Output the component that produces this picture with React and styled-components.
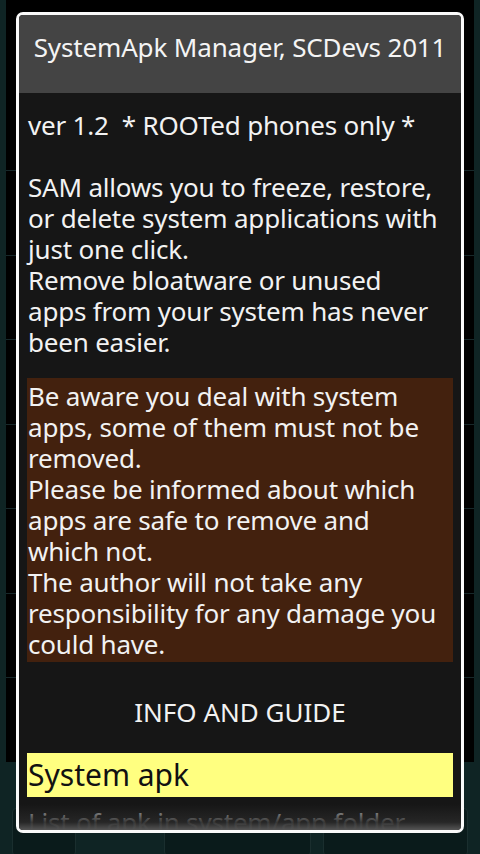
import React from 'react';
import styled, { createGlobalStyle } from 'styled-components';

const GlobalStyle = createGlobalStyle`
    html, body {
        margin: 0;
        padding: 0;
        background: #0c1c1c;
    }
    body {
        font-family: "Noto Sans", "DejaVu Sans", sans-serif;
    }
`;

const rows = [1, 2, 3, 4, 5, 6, 7];

const App = () => {
    return (
        <Screen>
            <GlobalStyle />
            <TopStrip />
            <ListPanel>
                {rows.map((n) => (
                    <ApkRow key={n}>
                        <ApkIcon />
                    </ApkRow>
                ))}
            </ListPanel>
            <ButtonBar>
                <GhostButton $width={64} />
                <GhostButton $width={148} $gap={88} />
                <GhostButton $width={146} $gap={12} />
            </ButtonBar>

            <Dialog>
                <Title>SystemApk Manager, SCDevs 2011</Title>
                <Body>
                    <Paragraph>
                        ver 1.2&nbsp; * ROOTed phones only *<br />
                        <br />
                        SAM allows you to freeze, restore,<br />
                        or delete system applications with<br />
                        just one click.<br />
                        Remove bloatware or unused<br />
                        apps from your system has never<br />
                        been easier.
                    </Paragraph>
                    <Warning>
                        Be aware you deal with system<br />
                        apps, some of them must not be<br />
                        removed.<br />
                        Please be informed about which<br />
                        apps are safe to remove and<br />
                        which not.<br />
                        The author will not take any<br />
                        responsibility for any damage you<br />
                        could have.
                    </Warning>
                    <SectionLabel>INFO AND GUIDE</SectionLabel>
                    <Heading>System apk</Heading>
                    <Paragraph $muted>List of apk in system/app folder</Paragraph>
                    <FadeEdge />
                </Body>
            </Dialog>
        </Screen>
    );
}

export default App;

const Screen = styled.div`
    position: relative;
    width: 480px;
    height: 854px;
    overflow: hidden;
    background: #0f2424;
    display: flex;
    flex-direction: column;
`;

const TopStrip = styled.div`
    height: 12px;
    background: #0d1d1e;
`;

const ListPanel = styled.div`
    margin: 0 6px;
    height: 762px;
    background: #000;
    display: flex;
    flex-direction: column;
    padding-top: 170px;
    box-sizing: border-box;
`;

const ApkRow = styled.div`
    height: 92px;
    border-top: 1px solid #17282a;
    display: flex;
    align-items: center;
    padding-left: 14px;
    box-sizing: border-box;
`;

const ApkIcon = styled.div`
    width: 36px;
    height: 36px;
    border-radius: 8px;
    background: #141c1c;
`;

const ButtonBar = styled.div`
    display: flex;
    padding: 46px 12px 0;
`;

const GhostButton = styled.div`
    width: ${(p) => p.$width}px;
    margin-left: ${(p) => p.$gap || 0}px;
    height: 48px;
    border-radius: 4px;
    background: #0a1b1b;
    border: 1px solid #1a2e2e;
    box-sizing: border-box;
`;

const Dialog = styled.div`
    position: absolute;
    left: 16px;
    top: 12px;
    width: 448px;
    height: 821px;
    box-sizing: border-box;
    border: 3px solid #fafafa;
    border-radius: 7px;
    overflow: hidden;
    display: flex;
    flex-direction: column;
    background: #161616;
`;

const Title = styled.div`
    height: 78px;
    box-sizing: border-box;
    padding-top: 17px;
    background: #444444;
    color: #f4f4f4;
    font-size: 26px;
    line-height: 31px;
    letter-spacing: -0.15px;
    text-align: center;
    white-space: nowrap;
`;

const Body = styled.div`
    position: relative;
    flex: 1;
    overflow: hidden;
    padding: 17px 8px 0;
    display: flex;
    flex-direction: column;
`;

const Paragraph = styled.div`
    color: ${(p) => (p.$muted ? '#bdbdbd' : '#f2f2f2')};
    font-size: 26px;
    line-height: 31px;
    letter-spacing: -0.2px;
    padding-left: 1px;
    white-space: nowrap;
    margin-top: ${(p) => (p.$muted ? '10px' : '0')};
`;

const Warning = styled(Paragraph)`
    margin-top: 20px;
    padding: 3px 0 2px 1px;
    background: #43210e;
`;

const SectionLabel = styled.div`
    margin-top: 35px;
    color: #f2f2f2;
    font-size: 26px;
    line-height: 31px;
    text-align: center;
`;

const Heading = styled.div`
    margin-top: 25px;
    height: 44px;
    background: #ffff80;
    color: #111;
    font-size: 30px;
    line-height: 44px;
    padding-left: 1px;
`;

const FadeEdge = styled.div`
    position: absolute;
    left: 0;
    right: 0;
    bottom: 0;
    height: 26px;
    background: linear-gradient(to bottom, rgba(22, 22, 22, 0), rgba(40, 40, 40, 0.9) 70%, #555 100%);
`;
